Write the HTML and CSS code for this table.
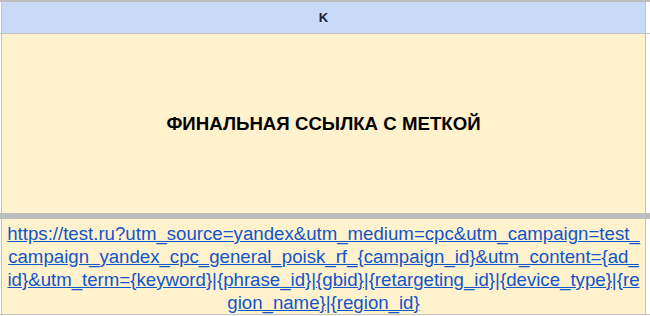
FILE: index.html
```html
<!DOCTYPE html>
<html lang="ru">
<head>
<meta charset="utf-8">
<link rel="stylesheet" href="styles.css">
</head>
<body>
<div class="sheet">
  <div class="row row-header">
    <div class="cell cell-header">K</div>
  </div>
  <div class="row row-title">
    <div class="cell cell-title">ФИНАЛЬНАЯ ССЫЛКА С МЕТКОЙ</div>
  </div>
  <div class="freeze"></div>
  <div class="row row-link">
    <div class="cell cell-link"><a class="link" href="#"><span class="ln">https://test.ru?utm_source=yandex&amp;utm_medium=cpc&amp;utm_campaign=test_</span><br><span class="ln">campaign_yandex_cpc_general_poisk_rf_{campaign_id}&amp;utm_content={ad_</span><br><span class="ln">id}&amp;utm_term={keyword}|{phrase_id}|{gbid}|{retargeting_id}|{device_type}|{re</span><br><span class="ln">gion_name}|{region_id}</span></a></div>
  </div>
</div>
</body>
</html>
```
FILE: styles.css
```css
html, body {
  margin: 0;
  padding: 0;
  background: #ffffff;
}
.sheet {
  width: 650px;
  font-family: "Liberation Sans", Arial, sans-serif;
}
.row {
  display: flex;
  border-bottom: 1px solid #c4c4c4;
}
.cell {
  margin-left: 1px;
  width: 643px;
  border-left: 1px solid #c4c4c4;
  border-right: 1px solid #c4c4c4;
  display: flex;
  align-items: center;
  justify-content: center;
  text-align: center;
}
.row-header {
  border-top: 2px solid #bdbdbd;
}
.cell-header {
  height: 31px;
  background: #c9daf8;
  color: #1a2033;
  font-size: 13px;
  font-weight: bold;
}
.row-title {
  border-bottom: none;
}
.cell-title {
  height: 179px;
  background: #fff2cc;
  color: #000000;
  font-size: 18.67px;
  font-weight: bold;
}
.freeze {
  height: 6px;
  background: #bdbdbd;
}
.cell-link {
  height: 95px;
  align-items: flex-end;
  background: #fff2cc;
}
.link {
  display: block;
  color: #1155cc;
  text-decoration: underline;
  font-size: 18.65px;
  line-height: 23px;
}
.ln {
  white-space: nowrap;
}
```
